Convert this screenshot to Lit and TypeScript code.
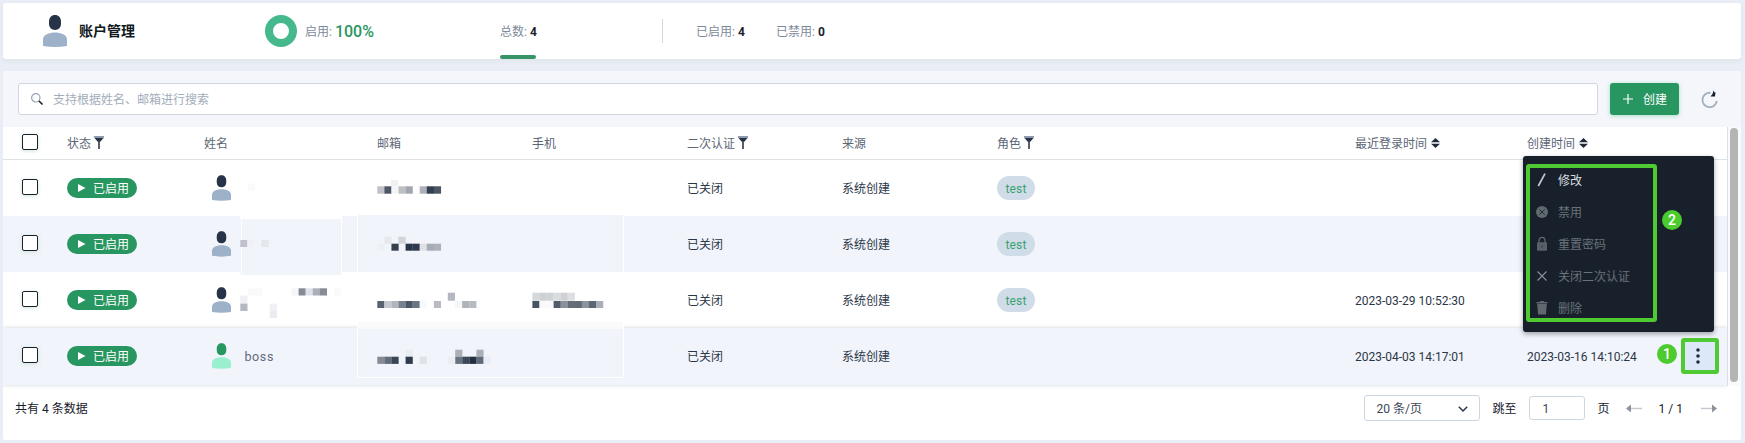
import { LitElement, html, svg, css, nothing } from "lit";
import { customElement } from "lit/decorators.js";

type Row = { created?: string; login?: string; name?: string; role?: string; boss?: boolean };

const rows: Row[] = [
  { role: "test" },
  { role: "test" },
  { role: "test", login: "2023-03-29 10:52:30" },
  { name: "boss", boss: true, login: "2023-04-03 14:17:01", created: "2023-03-16 14:10:24" },
];

// Masked cells: x, y, height, then one colour per 7px block ("" leaves a gap).
const masks: [number, number, number, string[]][] = [
  [248, 183.5, 7, ["#f9fafb"]],
  [391, 180, 6.5, ["#f0f1f3"]],
  [377.3, 186.3, 7.4, ["#bfc0c9", "#4f5667", "#f5f5f7", "#bcc0c5", "#a2a6ae", "", "#acb0b8", "#333f4e", "#4c5564"]],
  [240.3, 240, 7, ["#bfc1cc", "#eff1f6", "", "#e4e7ed"]],
  [384.3, 236.7, 7, ["#e6e8ec", "", "#d2d4d9"]],
  [377.3, 243.7, 7, ["#eeeff4", "", "#35404f", "", "#29364a", "#2f3b4d", "#dfe1e6", "#a5acb4", "#adb1ba"]],
  [248, 288.3, 7.2, ["#f9f9fb", "#fafafb"]],
  [291.5, 288.3, 7.2, ["#f5f6f8", "#858b96", "#dfe1e8", "#aaafb9", "#868d98", "", "#fafafb"]],
  [240.3, 295.6, 8, ["#f0f0f3"]],
  [240.3, 303.6, 7.4, ["#b5b7c2"]],
  [269.8, 303.6, 7.4, ["#f0f1f4"]],
  [269.8, 311, 7, ["#eaebee"]],
  [447.8, 292.7, 8, ["#b4b8c0"]],
  [377.3, 301, 7, ["#5a6170", "#c5c8cf", "#b2b5bc", "#78818e", "#4b5768", "#6c7480", "#f8f9fa", "", "#b9bbc3", "", "", "#f5f6f7", "#b0b3ba", "#b7bac2"]],
  [532.4, 292.7, 8, ["#d5d8db", "#cdd1d4", "#cfd3d5", "#dadcde", "#cfd2d4", "#dedfe1"]],
  [532.4, 301, 7, ["#475365", "#f8f9fa", "#fafafb", "#515b6b", "#8b919c", "#646d7a", "#636b78", "#8c939d", "#5d6674", "#a9adb5"]],
  [405.8, 349.7, 7, ["#e9ecf0"]],
  [455.2, 349.7, 7, ["#abb0b7", "", "", "#abb0b7"]],
  [377.3, 356.7, 7.2, ["#858b96", "#636d7a", "#3a4657", "", "#303c4c", "", "#e0e2e8"]],
  [448.2, 356.7, 7.2, ["#ebedf2", "#6a7480", "#3a485a", "#223041", "#5f6b79", "#e8ecf5"]],
];

const person = (cls: string, head: string, body: string) => html`
  <svg class=${cls} viewBox="0 0 24 32">
    <path fill=${head} d="M12 0C15.500 0 18 2.600 18 6.600V8.600C18 12.600 15.500 15 12 15S6 12.600 6 8.600V6.600C6 2.600 8.500 0 12 0Z" />
    <path fill=${body} d="M0 24.500C0 19.500 6.500 17.500 12 17.500S24 19.500 24 24.500V31Q12 33 0 31Z" />
  </svg>`;

const filterIcon = html`
  <svg class="filter" width="10" height="13" viewBox="0 0 10 13">
    <path fill="#8d9bac" d="M0 0H10V2H0Z" />
    <path fill="#253144" d="M.5 2H9.500L6 6H4Z" />
    <path fill="#56606e" d="M4 5.500H6V13H4Z" />
  </svg>`;

const sortIcon = html`
  <svg class="sort" width="9" height="10" viewBox="0 0 9 10">
    <path fill="#1f2b3a" d="M4.500 0L9 4.300H0ZM4.500 10L0 5.700H9Z" />
  </svg>`;

const menuItems = [
  { label: "修改", on: true, icon: svg`<path d="M2.300 12L9 -.3" stroke="#c3c8cd" stroke-width="1.700" />` },
  { label: "禁用", icon: svg`<circle cx="6" cy="6" r="6" fill="#616970" /><path d="M3.300 3.300L8.700 8.700M8.700 3.300L3.300 8.700" stroke="#222c35" />` },
  { label: "重置密码", icon: svg`<path d="M3 5V2.500A3 3.200 0 0 1 9 2.500V5" fill="none" stroke="#616970" stroke-width="1.200" /><rect x="1" y="4.300" width="10" height="8.500" rx="1" fill="#586067" /><path d="M6 7V10" stroke="#36404a" />` },
  { label: "关闭二次认证", icon: svg`<path d="M1.500 1.500L10.500 10.500M10.500 1.500L1.500 10.500" stroke="#8a9197" stroke-width="1.100" />` },
  { label: "删除", icon: svg`<path fill="#616970" d="M.5 0H4V-1H8V0H11.500V1.400H.5ZM1.200 2H10.800L10 12.500H2Z" />` },
];

@customElement("app-root")
export class AppRoot extends LitElement {
  static styles = css`
    :host { display: block; }
    * { box-sizing: border-box; }
    svg { display: block; flex: none; overflow: visible; }
    .page {
      position: relative; width: 1745px; height: 443px; overflow: hidden; background: #e9edf5;
      padding: 3px 4px 3px 3px; display: flex; flex-direction: column; gap: 12px;
      font: 12px/18px Roboto, "Noto Sans CJK SC", sans-serif; color: #2b3647;
    }
    .card {
      height: 56px; flex: none; background: #fff; border-radius: 3px; display: grid; align-items: center;
      grid-template-columns: 40px 222px 235px 162px 34px 80px 1fr; box-shadow: 0 2px 4px #dfe4ea;
    }
    .title { grid-column: 2; display: flex; align-items: center; gap: 12px; font-size: 14px; font-weight: 600; color: #101820; }
    .person-lg { width: 24px; height: 32px; }
    .ratio { display: flex; align-items: center; gap: 8px; color: #7e8a9b; white-space: pre; }
    .ratio-text { display: flex; align-items: center; gap: 3px; padding-top: 2px; }
    .percent { font-size: 16px; font-weight: 500; color: #289660; }
    .stat { color: #7e8a9b; padding-top: 1px; white-space: nowrap; }
    .num { color: #18212d; font-weight: 700; }
    .total { align-self: stretch; width: 36px; display: flex; flex-direction: column; justify-content: space-between; padding-top: 19px; }
    .bar { height: 4px; border-radius: 2px; background: #369466; }
    .rule { width: 1px; height: 24px; background: #d0d9dc; }
    .panel { flex: 1; background: #fff; display: flex; flex-direction: column; border-radius: 2px; overflow: hidden; }
    .toolbar { height: 56px; flex: none; background: #f4f6fb; display: flex; align-items: center; padding: 0 23px 0 15px; gap: 12px; }
    .search { flex: 1; height: 32px; border: 1px solid #cfd6e0; border-radius: 3px; background: #fff; display: flex; align-items: center; gap: 10px; padding: 2px 0 0 12px; color: #a2adba; }
    .search svg { margin-top: -3px; }
    .create { width: 69px; height: 32px; border-radius: 3px; background: #289660; color: #fff; display: flex; align-items: center; gap: 10px; padding: 1px 0 0 13px; box-shadow: 0 1px 4px #a9dcc4; }
    .create svg { margin-top: -2px; }
    .refresh { margin: 0 0 0 10px; }
    .body { display: flex; height: 259px; flex: none; }
    .table { flex: 1; }
    .track { width: 14px; border-left: 1px solid #dcdfe3; background: #fafafa; padding: 1px 0 3px 2px; }
    .thumb { width: 8px; height: 254px; border-radius: 4px; background: #b4b4b4; }
    .row { display: grid; grid-template-columns: 64px 137px 173px 155px 155px 155px 155px 358px 172px 1fr; height: 56px; align-items: center; }
    .row:nth-child(odd) { background: #f1f4fa; }
    .row.head { background: #fff; height: 33px; border-bottom: 1px solid #dde2e6; color: #5b6675; }
    .row.last { height: 57px; box-shadow: 0 0 4px #ccd0d6; padding-bottom: 1px; }
    .label { display: flex; align-items: center; gap: 3px; padding-top: 1px; }
    .label .filter { margin-top: -2px; }
    .label .sort { margin: -2px 0 0 1px; }
    .box { width: 16px; height: 16px; margin: 0 0 2px 19px; border: 1px solid #17202b; border-radius: 2px; background: #fff; box-shadow: 0 1px 4px #cfe3dd; }
    .head .box { margin-bottom: 2px; }
    .tag { width: 70px; height: 20px; border-radius: 10px; background: #289660; color: #fff; display: flex; align-items: center; gap: 7px; padding: 1px 0 0 11px; }
    .tag svg { margin-top: -1px; }
    .user { display: flex; align-items: center; gap: 14px; padding-left: 7.5px; color: #5f6b7c; }
    .user-name { letter-spacing: .6px; padding-top: 2px; font-size: 12.500px; }
    .person-sm { width: 19px; height: 26px; }
    .text { padding-top: 2px; }
    .role { width: 38px; height: 24px; border-radius: 12px; background: #d0dce8; color: #38a273; display: flex; align-items: center; justify-content: center; padding-top: 2px; letter-spacing: .1px; }
    .footer { flex: 1; display: flex; align-items: center; padding: 0 24px 9px 12px; color: #17202b; }
    .count { flex: 1; }
    .size { width: 116px; height: 26px; border: 1px solid #cdd6e2; border-radius: 3px; display: flex; align-items: center; justify-content: space-between; padding: 1px 11px 0 12px; color: #3b4656; margin-top: -1px; }
    .jump { margin: 0 12px 0 13px; }
    .pageno { width: 56px; height: 24px; border: 1px solid #cdd6e2; border-radius: 3px; padding: 3px 13px; color: #3b4656; margin-top: -1px; }
    .unit { margin: 0 16px 0 13px; }
    .ratio-page { margin: 0 18px 0 17px; white-space: pre; }
    .masks { position: absolute; left: 0; top: 0; pointer-events: none; }
    .menu { position: absolute; left: 1523px; top: 156px; width: 191px; height: 176px; border-radius: 3px; background: #18212b; box-shadow: 0 2px 5px #17202b66; padding: 8px 0 0 13px; }
    .item { height: 32px; display: flex; align-items: center; gap: 10px; color: #69727a; }
    .item span { padding-top: 2px; }
    .item.on { color: #d8dce0; }
    .frame { position: absolute; border: 4px solid #50ca32; border-radius: 3px; }
    .frame-menu { left: 1526px; top: 164px; width: 131px; height: 158px; }
    .frame-more { left: 1681px; top: 338px; width: 38px; height: 36px; background: #dce8f7; display: flex; align-items: center; padding-left: 11px; }
    .badge { position: absolute; width: 20px; height: 20px; border-radius: 50%; background: #4ccb2f; color: #fff; font: 500 14px/21px Roboto, sans-serif; text-align: center; }
    .badge-1 { left: 1657px; top: 344px; }
    .badge-2 { left: 1662px; top: 210px; }
  `;

  private renderRow(r: Row, last: boolean) {
    return html`<div class="row ${last ? "last" : ""}">
      <span class="box"></span>
      <span class="tag">
        <svg width="8" height="8" viewBox="0 0 8 8"><path fill="#fff" d="M0 0L7.500 4L0 8Z" /></svg>已启用
      </span>
      <span class="user">${r.boss ? person("person-sm", "#289660", "#9aefce") : person("person-sm", "#273448", "#9db1c8")}<span class="user-name">${r.name ?? nothing}</span></span>
      <span></span><span></span>
      <span class="text">已关闭</span>
      <span class="text">系统创建</span>
      <span>${r.role ? html`<span class="role">${r.role}</span>` : nothing}</span>
      <span class="text">${r.login ?? nothing}</span>
      <span class="text">${r.created ?? nothing}</span>
    </div>`;
  }

  render() {
    return html`<div class="page">
      <div class="card">
        <div class="title">${person("person-lg", "#273448", "#9db1c8")}<span>账户管理</span></div>
        <div class="ratio">
          <svg width="32" height="32" viewBox="0 0 32 32"><circle cx="16" cy="16" r="12" fill="none" stroke="#45b88c" stroke-width="8" /></svg>
          <span class="ratio-text"><span>启用:</span><span class="percent">100%</span></span>
        </div>
        <div class="total"><span class="stat">总数: <span class="num">4</span></span><span class="bar"></span></div>
        <span class="rule"></span>
        <span class="stat">已启用: <span class="num">4</span></span>
        <span class="stat">已禁用: <span class="num">0</span></span>
      </div>
      <div class="panel">
        <div class="toolbar">
          <div class="search">
            <svg width="12" height="12" viewBox="0 0 12 12"><circle cx="4.800" cy="4.800" r="4.200" fill="none" stroke="#97a2b0" stroke-width="1.200" /><path d="M8 8L11.500 11.500" stroke="#17202b" stroke-width="1.600" /></svg>
            <span>支持根据姓名、邮箱进行搜索</span>
          </div>
          <div class="create">
            <svg width="10" height="10" viewBox="0 0 10 10"><path d="M5 0V10M0 5H10" stroke="#fff" stroke-width="1.200" /></svg>创建
          </div>
          <svg class="refresh" width="17" height="17" viewBox="0 0 17 17">
            <path d="M9.500 1.800A7.200 7.200 0 1 0 15.800 10" fill="none" stroke="#a3afbe" stroke-width="1.800" />
            <path d="M12.500 -.5L13.500 1.500L14.500 1.200L14 5.500L9.500 5.500L11.500 3Z" fill="#18222e" />
          </svg>
        </div>
        <div class="body">
          <div class="table">
            <div class="row head">
              <span class="box"></span>
              <span class="label">状态${filterIcon}</span><span class="label">姓名</span><span class="label">邮箱</span><span class="label">手机</span>
              <span class="label">二次认证${filterIcon}</span><span class="label">来源</span>
              <span class="label">角色${filterIcon}</span>
              <span class="label">最近登录时间${sortIcon}</span><span class="label">创建时间${sortIcon}</span>
            </div>
            ${rows.map((r, i) => this.renderRow(r, i === rows.length - 1))}
          </div>
          <div class="track"><div class="thumb"></div></div>
        </div>
        <div class="footer">
          <span class="count">共有 4 条数据</span>
          <span class="size">20 条/页<svg width="10" height="6" viewBox="0 0 10 6"><path d="M.8 .8L5 5L9.200 .8" fill="none" stroke="#2b3647" stroke-width="1.500" /></svg></span>
          <span class="jump">跳至</span>
          <span class="pageno">1</span>
          <span class="unit">页</span>
          <svg width="16" height="9" viewBox="0 0 16 9"><path d="M4 4.500H16" stroke="#c3c9cf" stroke-width="1.500" /><path d="M0 4.500L5 .5V8.500Z" fill="#8b939b" /></svg>
          <span class="ratio-page">1 / 1</span>
          <svg width="16" height="9" viewBox="0 0 16 9"><path d="M0 4.500H12" stroke="#c3c9cf" stroke-width="1.500" /><path d="M16 4.500L11 .5V8.500Z" fill="#8b939b" /></svg>
        </div>
      </div>
      <svg class="masks" width="1745" height="443" viewBox="0 0 1745 443">
        <path fill="#fff" d="M240 216H342V219H240Z" />
        <path fill="#f1f4fa" d="M240 219H342V275H240Z" />
        <path fill="none" stroke="#fff" d="M241.500 219V275M341.500 219V275M357.500 215V272M623.500 215V272" />
        <path fill="#f1f4fa" d="M358 215H623V217H358Z" />
        <path fill="#f1f4fa" stroke="#fff" d="M357.500 321.500H623.500V377.500H357.500Z" />
        <path fill="#fafafb" d="M358 322H623V329H358Z" />
        ${masks.map(([x, y, h, cells]) =>
          cells.map((c, i) => (c ? svg`<rect x=${x + i * 7.07} y=${y} width="7.200" height=${h} fill=${c} />` : nothing)))}
      </svg>
      <div class="menu">
        ${menuItems.map((m) => html`<div class="item ${m.on ? "on" : ""}">
          <svg width="12" height="12" viewBox="0 0 12 12">${m.icon}</svg><span>${m.label}</span>
        </div>`)}
      </div>
      <div class="frame frame-menu"></div>
      <div class="frame frame-more">
        <svg width="4" height="16" viewBox="0 0 4 16"><g fill="#222c39"><circle cx="2" cy="2" r="1.800" /><circle cx="2" cy="8" r="1.800" /><circle cx="2" cy="14" r="1.800" /></g></svg>
      </div>
      <span class="badge badge-1">1</span>
      <span class="badge badge-2">2</span>
    </div>`;
  }
}
